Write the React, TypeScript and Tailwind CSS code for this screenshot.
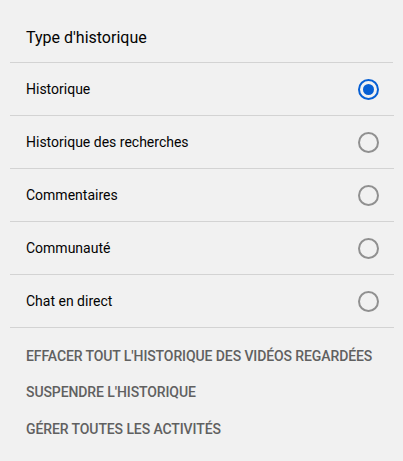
import { useState } from 'react'

const OPTIONS = ['Historique', 'Historique des recherches', 'Commentaires', 'Communauté', 'Chat en direct']
const ACTIONS = [
  "Effacer tout l'historique des vidéos regardées",
  "Suspendre l'historique",
  'Gérer toutes les activités',
]

function Radio({ checked }: { checked: boolean }) {
  return (
    <svg width="21" height="21" viewBox="0 0 21 21" className="flex-shrink-0">
      <circle cx="10.5" cy="10.5" r="9.5" fill="none" stroke={checked ? '#065fd4' : '#909090'} strokeWidth="2" />
      {checked && <circle cx="10.5" cy="10.5" r="5.5" fill="#065fd4" />}
    </svg>
  )
}

export default function App() {
  const [selected, setSelected] = useState(0)

  return (
    <div className="w-[403px] h-[461px] bg-[#f1f1f1] font-['Roboto',sans-serif] overflow-hidden">
      {/* titre */}
      <div className="mx-[10px] px-[16px] pt-[26px] pb-[12px] border-b border-[#d3d3d3]">
        <h2 className="text-[16px] leading-[24px] font-normal text-[#030303]">Type d'historique</h2>
      </div>

      {/* options */}
      <div>
        {OPTIONS.map((label, i) => (
          <button
            key={label}
            type="button"
            onClick={() => setSelected(i)}
            className="w-[384px] mx-[10px] h-[53px] pl-[16px] pr-[15px] flex items-center justify-between border-b border-[#d3d3d3] text-left"
          >
            <span className="text-[14px] text-[#030303]">{label}</span>
            <Radio checked={selected === i} />
          </button>
        ))}
      </div>

      {/* actions */}
      <div className="pt-[10px] px-[26px]">
        {ACTIONS.map(a => (
          <div key={a} className="h-[36.5px] flex items-center text-[14px] font-medium uppercase tracking-[-0.1px] text-[#606060]">
            {a}
          </div>
        ))}
      </div>
    </div>
  )
}
